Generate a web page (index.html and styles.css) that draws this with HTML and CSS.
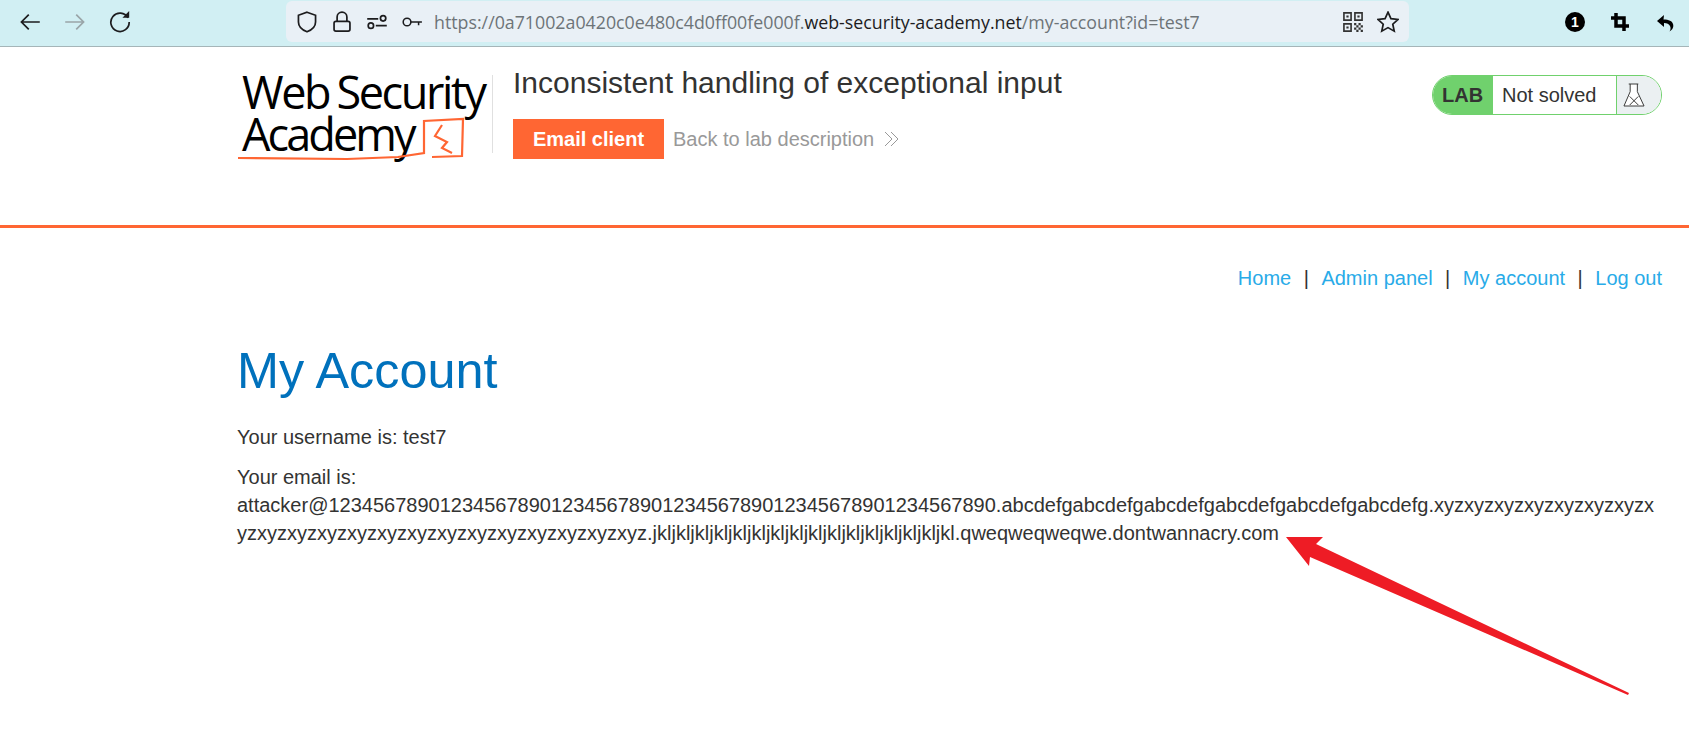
FILE: index.html
```html
<!DOCTYPE html>
<html lang="en">
<head>
    <meta charset="UTF-8">
    <title>Inconsistent handling of exceptional input</title>
    <link rel="stylesheet" href="styles.css">
</head>
<body>
    <div class="toolbar">
        <div class="nav-buttons">
            <svg class="icon" viewBox="1 1 18 18"><path d="M18 10H3M9 4l-6 6 6 6"/></svg>
            <svg class="icon icon-off" viewBox="1 1 18 18"><path d="M2 10h15M11 4l6 6-6 6"/></svg>
            <svg class="icon" viewBox="1 1 18 18"><path d="M16.500 6.500A7.500 7.500 0 1 0 17.500 10"/><path class="solid" d="M12 6.500h5.500V1z"/></svg>
        </div>
        <div class="urlbar">
            <svg class="icon" viewBox="1 1 18 18"><path d="M10 2l7 2.500V10c0 4-3 6.500-7 8-4-1.500-7-4-7-8V4.500z"/></svg>
            <svg class="icon" viewBox="1 1 18 18"><path d="M6 9.500V6a4 4 0 0 1 8 0v3.500M5 9.500h10a1.500 1.500 0 0 1 1.500 1.500v5a1.500 1.500 0 0 1-1.500 1.500H5A1.500 1.500 0 0 1 3.500 16v-5A1.500 1.500 0 0 1 5 9.500z"/></svg>
            <svg class="icon" viewBox="1 1 18 18"><path d="M2 7.500h9M9 13h9"/><circle cx="15" cy="7" r="2.200"/><circle cx="5" cy="13" r="2.200"/></svg>
            <svg class="icon" viewBox="0 0 20 20"><circle cx="5.500" cy="10" r="3.500"/><path d="M9 10h10M16 10v3"/></svg>
            <div class="url"><span>https://0a71002a0420c0e480c4d0ff00fe000f.</span><span class="url-host">web-security-academy.net</span><span>/my-account?id=test7</span></div>
            <svg class="icon icon-qr" viewBox="0 0 20 20"><path fill-rule="evenodd" d="M1 1h8v8H1zM2.500 2.500v5h5v-5zM4 4h2v2H4zM11 1h8v8h-8zM12.500 2.500v5h5v-5zM14 4h2v2h-2zM1 11h8v8H1zM2.500 12.500v5h5v-5zM4 14h2v2H4zM11 11h2v2h-2zM15 11h2v2h-2zM13 13h2v2h-2zM17 13h2v2h-2zM11 15h2v2h-2zM15 15h2v2h-2zM13 17h2v2h-2zM17 17h2v2h-2z"/></svg>
            <svg class="icon" viewBox="1 1 18 18"><path d="M10 2l2.400 5.300 5.800.6-4.300 3.900 1.200 5.700-5.100-2.900-5.100 2.900 1.200-5.700L1.800 7.900l5.800-.6z"/></svg>
        </div>
        <div class="extensions">
            <div class="badge-one">1</div>
            <svg class="icon icon-heavy" viewBox="0 0 20 20"><path d="M6 1v13h13M1 6h13v13"/></svg>
            <svg class="icon-back" viewBox="0 0 20 20"><path d="M9 3L2 9l7 6v-4c3 0 5 1 6 3 1 2 .5 4-.5 5.500 3-1.500 4.500-4.500 3.500-7.500-.8-2.800-4-4.500-9.500-4.500z"/></svg>
        </div>
    </div>

    <header class="lab-header">
        <div class="container header-row">
            <div class="logo">
                <div class="logo-text">
                    <div class="logo-web">Web Security</div>
                    <div class="logo-academy">Academy</div>
                </div>
                <svg class="logo-mark" viewBox="0 0 230 50"><path d="M1 43L110 44L161 42L187 38L187 6L226 4L225 41L195 42M205 10L198 21L210 27L205 33L215 38"/></svg>
            </div>
            <div class="title-block">
                <h2 class="lab-title">Inconsistent handling of exceptional input</h2>
                <div class="lab-actions">
                    <a class="btn-email" href="#">Email client</a>
                    <a class="back-link" href="#">Back to lab description
                        <svg class="chevrons" viewBox="0 0 16 16"><path d="M2 1l7 7-7 7M8 1l7 7-7 7"/></svg>
                    </a>
                </div>
            </div>
            <div class="lab-status">
                <div class="status-lab">LAB</div>
                <div class="status-text">Not solved</div>
                <div class="status-icon">
                    <svg viewBox="0 0 23 25"><path d="M6 1h10M7.500 1v8L1 24h21L15 9V1M7 14l9 9M16 14l-9 9"/></svg>
                </div>
            </div>
        </div>
    </header>

    <main class="container">
        <nav class="top-links">
            <a href="#">Home</a><span class="sep">|</span><a href="#">Admin panel</a><span class="sep">|</span><a href="#">My account</a><span class="sep">|</span><a href="#">Log out</a>
        </nav>
        <h1 class="page-title">My Account</h1>
        <p class="info">Your username is: test7</p>
        <p class="info email">Your email is:<br>attacker@123456789012345678901234567890123456789012345678901234567890.abcdefgabcdefgabcdefgabcdefgabcdefgabcdefg.xyzxyzxyzxyzxyzxyzxyzxyzxyzxyzxyzxyzxyzxyzxyzxyzxyzxyzxyzxyzxyz.jkljkljkljkljkljkljkljkljkljkljkljkljkljkljkljkl.qweqweqweqwe.dontwannacry.com</p>
    </main>

    <svg class="arrow" viewBox="0 0 1689 742"><polygon points="1286,537 1323,537 1316,544 1629,693 1628,695 1310,557 1309,566"/></svg>
</body>
</html>
```

FILE: styles.css
```css
html, body {
    margin: 0;
    padding: 0;
}
body {
    font-family: "Liberation Sans", Arial, sans-serif;
    color: #333332;
    background: #fff;
    font-size: 20px;
    height: 742px;
    overflow: hidden;
    position: relative;
}
a {
    text-decoration: none;
}

/* browser toolbar */
.toolbar {
    height: 47px;
    box-sizing: border-box;
    background: #d1eff3;
    border-bottom: 1px solid #a5b5b8;
    display: flex;
    align-items: flex-start;
    padding: 1px 0 0 19px;
}
.icon {
    width: 22px;
    height: 22px;
    fill: none;
    stroke: #1c1c1e;
    stroke-width: 1.400;
    flex: none;
}
.icon-off {
    stroke: #9aa5a8;
}
.solid {
    fill: #1c1c1e;
    stroke: none;
}
.nav-buttons {
    display: flex;
    gap: 23px;
    padding-top: 10px;
    width: 267px;
    flex: none;
}
.urlbar {
    width: 1123px;
    height: 41px;
    box-sizing: border-box;
    background: #e9f0f6;
    border-radius: 6px;
    display: flex;
    align-items: center;
    gap: 13px;
    padding: 0 10px 0 10px;
    flex: none;
}
.url {
    flex: 1;
    margin-left: -2px;
    font-family: "Open Sans", sans-serif;
    font-size: 17.800px;
    color: #6d7478;
    white-space: nowrap;
}
.url-host {
    color: #1c1c1e;
}
.icon-qr {
    fill: #333;
    stroke: none;
}
.extensions {
    display: flex;
    gap: 25px;
    margin-left: 156px;
    padding-top: 11px;
    align-items: center;
}
.badge-one {
    width: 20px;
    height: 20px;
    border-radius: 50%;
    background: #000;
    color: #fff;
    font-size: 14px;
    font-weight: bold;
    text-align: center;
    line-height: 20px;
}
.icon-heavy {
    width: 20px;
    height: 20px;
    stroke: #000;
    stroke-width: 3.500;
}
.icon-back {
    width: 20px;
    height: 20px;
    fill: #000;
}

/* lab header */
.container {
    margin: 0 27px 0 237px;
}
.lab-header {
    height: 178px;
    border-bottom: 3px solid #ff6633;
}
.header-row {
    display: flex;
    align-items: flex-start;
}
.logo {
    position: relative;
    width: 255px;
    height: 78px;
    margin-top: 28px;
    border-right: 1px solid #e0e0e0;
    flex: none;
}
.logo-text {
    font-family: "Open Sans", sans-serif;
    font-size: 45px;
    font-weight: 500;
    line-height: 42px;
    color: #000;
    white-space: nowrap;
    padding-left: 5px;
    margin-top: -4px;
}
.logo-web {
    letter-spacing: -2.400px;
    word-spacing: -2px;
}
.logo-academy {
    letter-spacing: -2.900px;
}
.logo-mark {
    position: absolute;
    left: 0;
    top: 40px;
    width: 230px;
    height: 50px;
    fill: none;
    stroke: #ff6633;
    stroke-width: 2.200;
}
.title-block {
    margin-left: 20px;
    padding-top: 23px;
}
.lab-title {
    margin: 0;
    font-weight: normal;
    font-size: 30px;
    line-height: 25px;
    color: #333332;
    white-space: nowrap;
}
.lab-actions {
    display: flex;
    align-items: center;
    margin-top: 24px;
}
.btn-email {
    background: #ff6633;
    color: #fff;
    font-weight: bold;
    width: 151px;
    height: 40px;
    line-height: 40px;
    text-align: center;
}
.back-link {
    color: #999;
    margin-left: 9px;
    display: flex;
    align-items: center;
    gap: 9px;
    white-space: nowrap;
}
.chevrons {
    width: 16px;
    height: 16px;
    fill: none;
    stroke: #999;
    stroke-width: 1;
}
.lab-status {
    margin-left: auto;
    margin-top: 28px;
    display: flex;
    width: 230px;
    height: 40px;
    box-sizing: border-box;
    border: 1px solid #70d16d;
    border-radius: 20px;
    overflow: hidden;
    flex: none;
}
.status-lab {
    width: 60px;
    background: #70d16d;
    font-weight: bold;
    line-height: 38px;
    padding-left: 9px;
    box-sizing: border-box;
}
.status-text {
    width: 124px;
    border-right: 1px solid #70d16d;
    line-height: 38px;
    padding-left: 9px;
    box-sizing: border-box;
}
.status-icon {
    flex: 1;
    background: #ebf0f2;
    padding: 7px 0 0 6px;
}
.status-icon svg {
    width: 22px;
    height: 24px;
    fill: #fff;
    stroke: #333332;
    stroke-width: 1;
}

/* page body */
.top-links {
    text-align: right;
    padding-top: 38px;
    line-height: 24px;
}
.top-links a {
    color: #29abe8;
}
.sep {
    margin: 0 12.500px;
}
.page-title {
    margin: 51px 0 0;
    font-weight: normal;
    font-size: 50.400px;
    line-height: 60px;
    color: #0071bc;
}
.info {
    margin: 22px 0 0;
    line-height: 28px;
}
.email {
    margin-top: 12px;
    word-break: break-all;
}

/* red annotation arrow */
.arrow {
    position: absolute;
    left: 0;
    top: 0;
    width: 1689px;
    height: 742px;
    fill: #ee1c25;
    pointer-events: none;
}
```
